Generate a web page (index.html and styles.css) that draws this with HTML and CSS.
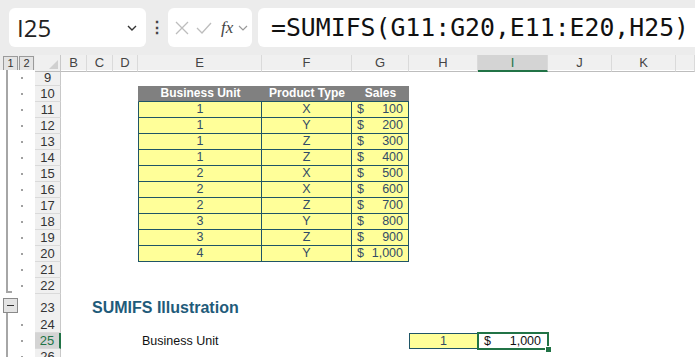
FILE: index.html
```html
<!DOCTYPE html>
<html lang="en">
<head>
    <meta charset="UTF-8">
    <title>SUMIFS Illustration</title>
    <link rel="stylesheet" href="styles.css">
</head>
<body>

<!-- Formula bar -->
<div class="topbar">
    <div class="name-box">
        <span class="ref">I25</span>
        <svg class="chev" width="12" height="8" viewBox="0 0 12 8"><path d="M2 2 L6 6 L10 2" fill="none" stroke="#333" stroke-width="1.4"/></svg>
    </div>
    <div class="grip">&#8942;</div>
    <div class="fx-box">
        <svg width="16" height="16" viewBox="0 0 16 16"><path d="M2 2 L14 14 M14 2 L2 14" stroke="#bdbdbd" stroke-width="1.3"/></svg>
        <svg width="18" height="16" viewBox="0 0 18 16"><path d="M2 8 L7 13 L16 3" fill="none" stroke="#bdbdbd" stroke-width="1.3"/></svg>
        <span class="fx">fx</span>
        <svg class="chev-sm" width="10" height="8" viewBox="0 0 10 8"><path d="M1 2 L5 6 L9 2" fill="none" stroke="#999" stroke-width="1.2"/></svg>
    </div>
    <div class="formula">=SUMIFS(G11:G20,E11:E20,H25)</div>
</div>

<!-- Sheet -->
<div class="sheet">
    <div class="row head-row">
        <div class="outline"><span class="lvl">1</span><span class="lvl">2</span></div>
        <div class="corner"><span class="tri"></span></div>
        <div class="colh">B</div><div class="colh">C</div><div class="colh">D</div>
        <div class="colh">E</div><div class="colh">F</div><div class="colh">G</div>
        <div class="colh">H</div><div class="colh sel">I</div><div class="colh">J</div>
        <div class="colh">K</div><div class="colh"></div>
    </div>

    <div class="row"><div class="outline line"><i class="dot"></i></div><div class="rowh">9</div></div>

    <div class="row">
        <div class="outline line"><i class="dot"></i></div><div class="rowh">10</div>
        <div></div><div></div><div></div>
        <div class="th first">Business Unit</div><div class="th">Product Type</div><div class="th">Sales</div>
    </div>

    <div class="row"><div class="outline line"><i class="dot"></i></div><div class="rowh">11</div><div></div><div></div><div></div>
        <div class="td first">1</div><div class="td">X</div><div class="td money"><span>$</span><span>100</span></div></div>
    <div class="row"><div class="outline line"><i class="dot"></i></div><div class="rowh">12</div><div></div><div></div><div></div>
        <div class="td first">1</div><div class="td">Y</div><div class="td money"><span>$</span><span>200</span></div></div>
    <div class="row"><div class="outline line"><i class="dot"></i></div><div class="rowh">13</div><div></div><div></div><div></div>
        <div class="td first">1</div><div class="td">Z</div><div class="td money"><span>$</span><span>300</span></div></div>
    <div class="row"><div class="outline line"><i class="dot"></i></div><div class="rowh">14</div><div></div><div></div><div></div>
        <div class="td first">1</div><div class="td">Z</div><div class="td money"><span>$</span><span>400</span></div></div>
    <div class="row"><div class="outline line"><i class="dot"></i></div><div class="rowh">15</div><div></div><div></div><div></div>
        <div class="td first">2</div><div class="td">X</div><div class="td money"><span>$</span><span>500</span></div></div>
    <div class="row"><div class="outline line"><i class="dot"></i></div><div class="rowh">16</div><div></div><div></div><div></div>
        <div class="td first">2</div><div class="td">X</div><div class="td money"><span>$</span><span>600</span></div></div>
    <div class="row"><div class="outline line"><i class="dot"></i></div><div class="rowh">17</div><div></div><div></div><div></div>
        <div class="td first">2</div><div class="td">Z</div><div class="td money"><span>$</span><span>700</span></div></div>
    <div class="row"><div class="outline line"><i class="dot"></i></div><div class="rowh">18</div><div></div><div></div><div></div>
        <div class="td first">3</div><div class="td">Y</div><div class="td money"><span>$</span><span>800</span></div></div>
    <div class="row"><div class="outline line"><i class="dot"></i></div><div class="rowh">19</div><div></div><div></div><div></div>
        <div class="td first">3</div><div class="td">Z</div><div class="td money"><span>$</span><span>900</span></div></div>
    <div class="row"><div class="outline line"><i class="dot"></i></div><div class="rowh">20</div><div></div><div></div><div></div>
        <div class="td first">4</div><div class="td">Y</div><div class="td money"><span>$</span><span>1,000</span></div></div>

    <div class="row"><div class="outline line"><i class="dot"></i></div><div class="rowh">21</div></div>
    <div class="row"><div class="outline line end"><i class="dot"></i></div><div class="rowh">22</div></div>

    <div class="row tall">
        <div class="outline"><span class="minus"></span></div><div class="rowh">23</div>
        <div></div><div class="title">SUMIFS Illustration</div>
    </div>

    <div class="row"><div class="outline line"><i class="dot"></i></div><div class="rowh">24</div></div>
    <div class="row">
        <div class="outline line"><i class="dot"></i></div><div class="rowh active">25</div>
        <div></div><div></div><div></div>
        <div class="label">Business Unit</div><div></div><div></div>
        <div class="input">1</div>
        <div class="result"><span>$</span><span>1,000</span></div>
    </div>
    <div class="row"><div class="outline line"><i class="dot"></i></div><div class="rowh">26</div></div>
</div>

</body>
</html>
```

FILE: styles.css
```css
/* Basic styling */
body { margin: 0; background: #fff; font-family: "Liberation Sans", Arial, sans-serif; overflow: hidden; }

/* Formula bar */
.topbar { height: 55px; background: #ececec; display: flex; align-items: flex-start; padding-top: 8px; box-sizing: border-box; }
.name-box { width: 137px; height: 39px; margin-left: 9px; background: #fff; border-radius: 6px; display: flex; align-items: center; justify-content: space-between; padding: 0 8px 0 8px; box-sizing: border-box; }
.name-box .ref { font-family: "Open Sans", sans-serif; font-size: 24px; color: #222; }
.grip { width: 22px; text-align: center; font-size: 16px; color: #444; line-height: 39px; font-weight: bold; }
.fx-box { width: 84px; height: 39px; background: #fff; border-radius: 6px; display: flex; align-items: center; gap: 5px; padding-left: 6px; box-sizing: border-box; }
.fx-box .fx { font-family: "Liberation Serif", serif; font-style: italic; font-size: 17px; color: #444; margin-left: 3px; }
.formula { flex: 1; height: 39px; margin-left: 6px; background: #fff; border-radius: 6px 0 0 6px; font-family: "DejaVu Sans Mono", monospace; font-size: 24.8px; color: #111; line-height: 39px; padding-left: 13px; white-space: nowrap; overflow: hidden; }

/* Sheet grid */
.row { display: grid; grid-template-columns: 35px 26px 26px 26px 25px 124px 90px 57px 69px 70px 64px 64px 1fr; height: 16px; font-size: 12.5px; }
.row.tall { height: 23px; }
.row > div { box-sizing: border-box; min-width: 0; }

/* Headers */
.head-row { height: 15px; background: #f0f0f0; }
.colh { text-align: center; line-height: 15px; color: #444; font-size: 13px; border-right: 1px solid #dadada; border-bottom: 1px solid #bdbdbd; }
.colh.sel { background: #d4d4d4; border-bottom: 2px solid #217346; color: #217346; }
.corner { background: #f0f0f0; border-right: 1px solid #c8c8c8; border-bottom: 1px solid #bdbdbd; position: relative; }
.corner .tri { position: absolute; right: 2px; bottom: 2px; border-left: 9px solid transparent; border-bottom: 9px solid #d0d0d0; }
.rowh { background: #f0f0f0; text-align: center; line-height: 15px; color: #333; font-size: 13px; border-right: 1px solid #c8c8c8; border-bottom: 1px solid #dadada; }
.rowh.active { background: #d4d4d4; color: #217346; border-right: 2px solid #217346; }
.tall .rowh { line-height: 27px; }

/* Outline gutter */
.outline { position: relative; background: #fff; }
.head-row .outline { background: #ececec; display: flex; gap: 1px; padding: 0 0 0 3px; align-items: center; }
.lvl { width: 13px; height: 13px; border: 1px solid #9a9a9a; background: #e4e4e4; font-size: 11px; line-height: 13px; text-align: center; color: #333; box-sizing: content-box; }
.outline.line::before { content: ""; position: absolute; left: 6px; top: 0; bottom: 0; width: 2px; background: #a6a6a6; }
.outline.end::before { bottom: 1px; }
.outline.end::after { content: ""; position: absolute; left: 6px; bottom: 1px; width: 6px; height: 2px; background: #a6a6a6; }
.dot { position: absolute; left: 21px; top: 7px; width: 2px; height: 2px; background: #a0a0a0; }
.minus { position: absolute; left: 3px; top: 4px; width: 13px; height: 13px; border: 1px solid #8a8a8a; background: #e4e4e4; }
.minus::after { content: ""; position: absolute; left: 3px; top: 6px; width: 7px; height: 1px; background: #333; }
.tall .outline::before { content: ""; position: absolute; left: 6px; top: 19px; bottom: 0; width: 2px; background: #a6a6a6; }

/* Data table */
.th { background: #808080; color: #fff; font-weight: bold; font-size: 12px; text-align: center; line-height: 15px; border-bottom: 1px solid #1f5566; }
.th.first { border-left: 1px solid #808080; }
.td { background: #ffff99; color: #324c66; text-align: center; line-height: 15px; border-right: 1px solid #1f5566; border-bottom: 1px solid #1f5566; }
.td.first { border-left: 1px solid #1f5566; }
.money { display: flex; justify-content: space-between; padding: 0 5px 0 5px; }

/* Illustration */
.title { grid-column: 4 / 10; font-weight: bold; font-size: 16px; color: #1f5b7a; line-height: 27px; padding-left: 5px; white-space: nowrap; }
.label { color: #111; line-height: 16px; padding-left: 4px; white-space: nowrap; }
.input { background: #ffff99; color: #324c66; text-align: center; line-height: 14px; border: 1px solid #1f5566; }
.result { position: relative; display: flex; justify-content: space-between; padding: 0 7px 0 6px; line-height: 16px; color: #111; outline: 2px solid #217346; outline-offset: -1px; }
.result::after { content: ""; position: absolute; right: -4px; bottom: -4px; width: 5px; height: 5px; background: #217346; border: 1px solid #fff; }
```
